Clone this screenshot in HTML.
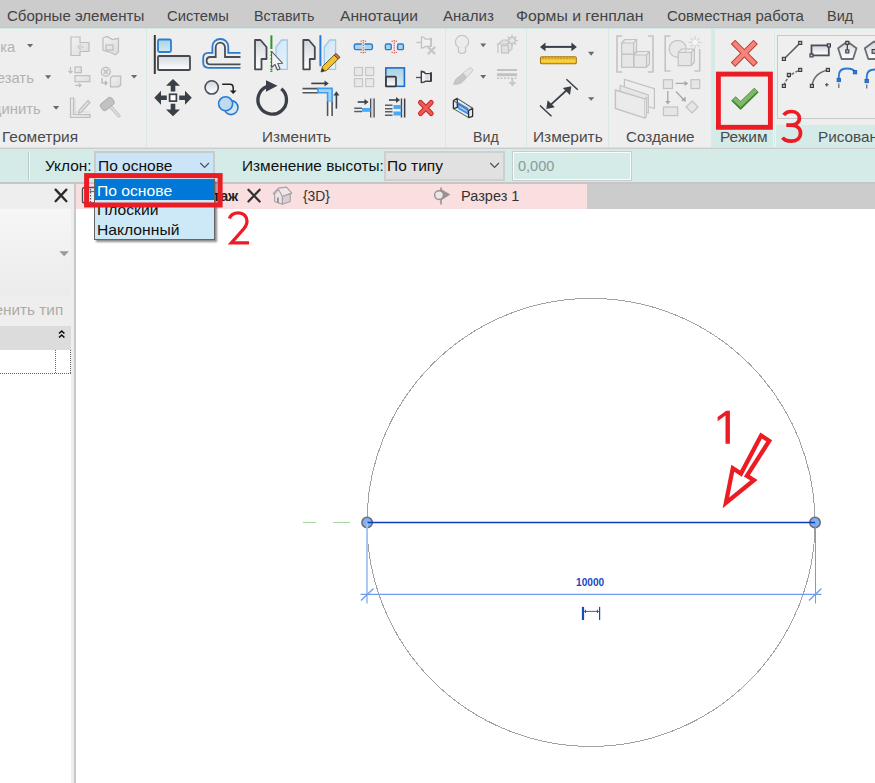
<!DOCTYPE html>
<html><head><meta charset="utf-8">
<style>
*{margin:0;padding:0;box-sizing:border-box}
html,body{width:875px;height:783px;overflow:hidden;background:#fff}
body{position:relative;font-family:"Liberation Sans",sans-serif}
.r{position:absolute}
.t{position:absolute;white-space:nowrap;line-height:0;height:0}
svg{position:absolute;overflow:visible}
</style></head><body>
<!-- tab bar -->
<div class="r" style="left:0;top:0;width:875px;height:28px;background:#cccccc"></div>
<div class="r" style="left:0;top:27px;width:875px;height:1px;background:#c6c6c6"></div>
<div class="r" style="left:0;top:28px;width:875px;height:1px;background:#d3e9e6"></div>
<!-- ribbon -->
<div class="r" style="left:0;top:29px;width:875px;height:118px;background:#eeeeee"></div>
<div class="r" style="left:0;top:147px;width:875px;height:1px;background:#d3e6e3"></div>
<div class="r" style="left:0;top:148px;width:875px;height:1px;background:#c9cccb"></div>
<!-- panel separators -->
<div class="r" style="left:146px;top:29px;width:1px;height:118px;background:#d6e9e6"></div>
<div class="r" style="left:445px;top:29px;width:1px;height:118px;background:#d6e9e6"></div>
<div class="r" style="left:526px;top:29px;width:1px;height:118px;background:#d6e9e6"></div>
<div class="r" style="left:608px;top:29px;width:1px;height:118px;background:#d6e9e6"></div>
<div class="r" style="left:711px;top:29px;width:4px;height:118px;background:#d4ebe8"></div>
<div class="r" style="left:715px;top:125px;width:58px;height:22px;background:#d4ebe8"></div>
<div class="r" style="left:773px;top:29px;width:3px;height:118px;background:#eef2f1"></div>
<div class="r" style="left:774px;top:29px;width:1px;height:118px;background:#d4ebe8"></div>
<div class="r" style="left:776px;top:125px;width:99px;height:22px;background:#d4ebe8"></div>
<div class="r" style="left:777px;top:35px;width:110px;height:84px;border:1px solid #c9c9c9;background:#efefef"></div>
<!-- options bar -->
<div class="r" style="left:0;top:149px;width:875px;height:33px;background:#d4ebe8"></div>
<div class="r" style="left:28px;top:152px;width:1px;height:28px;background:#b9c9c7"></div>
<div class="r" style="left:29px;top:152px;width:1px;height:28px;background:#f2f8f7"></div>
<div class="r" style="left:94px;top:151px;width:121px;height:30px;background:#cce4f7;border:2px solid #c9cacc"></div>
<div class="r" style="left:384px;top:151px;width:121px;height:30px;background:#e1e1e1;border:2px solid #cfcfcf"></div>
<div class="r" style="left:512px;top:151px;width:120px;height:30px;background:#c8cccc"></div>
<div class="r" style="left:513px;top:152px;width:118px;height:28px;background:#d4ebe8;border:1.5px solid #fafcfc"></div>
<div class="r" style="left:0;top:182px;width:875px;height:2px;background:#c6c6c6"></div>
<!-- left panel -->
<div class="r" style="left:0;top:184px;width:74px;height:599px;background:#eeeeee"></div>
<div class="r" style="left:74px;top:184px;width:2px;height:599px;background:#c9c9c9"></div>
<div class="r" style="left:0;top:209px;width:71px;height:87px;background:linear-gradient(#f6f6f6,#ebebeb)"></div>
<div class="r" style="left:0;top:326px;width:71px;height:24px;background:#dcdcdc"></div>
<div class="r" style="left:0;top:350px;width:71px;height:433px;background:#ffffff"></div>
<div class="r" style="left:0;top:373px;width:71px;height:1px;background:repeating-linear-gradient(90deg,#666 0 1px,transparent 1px 2px)"></div>
<div class="r" style="left:55px;top:350px;width:1px;height:24px;background:repeating-linear-gradient(180deg,#666 0 1px,transparent 1px 2px)"></div>
<div class="r" style="left:70px;top:350px;width:1px;height:24px;background:repeating-linear-gradient(180deg,#666 0 1px,transparent 1px 2px)"></div>
<!-- view tabs -->
<div class="r" style="left:76px;top:184px;width:511px;height:25px;background:#f9dfe0"></div>
<div class="r" style="left:587px;top:184px;width:288px;height:25px;background:#cccccc"></div>
<svg width="875" height="783" style="left:0;top:0" viewBox="0 0 875 783">
<defs>
<linearGradient id="gGray" x1="0" y1="0" x2="0" y2="1"><stop offset="0" stop-color="#d2d6dc"/><stop offset="1" stop-color="#ffffff"/></linearGradient>
<linearGradient id="gBlue" x1="0" y1="0" x2="0" y2="1"><stop offset="0" stop-color="#a9d2e6"/><stop offset="1" stop-color="#d3e9f3"/></linearGradient>
<linearGradient id="gLB" x1="0" y1="0" x2="1" y2="1"><stop offset="0" stop-color="#cfe6f4"/><stop offset="1" stop-color="#e6f2fa"/></linearGradient>
<linearGradient id="gDis" x1="0" y1="0" x2="1" y2="1"><stop offset="0" stop-color="#f2f2f2"/><stop offset="1" stop-color="#dcdcdc"/></linearGradient>
</defs>
<!-- ===== Geometry panel (disabled) ===== -->
<g fill="#6a6a6a"><path d="M27,44 h6.2 l-3.1,3.5z"/><path d="M45,75.2 h6.2 l-3.1,3.8z"/><path d="M53,106 h6.2 l-3.1,3.7z"/><path d="M131,74.9 h6.2 l-3.1,3.5z"/></g>
<g stroke="#bdbdbd" stroke-width="1.2" fill="url(#gDis)">
 <path d="M71,37 h9 v5.5 h9 v9 h-9 v4 h-9z"/>
 <path d="M84,47 l-4,0 M81,44 l-3,3 l3,3" fill="none" stroke="#c8c8c8"/>
 <path d="M103,38 l4,-1.5 l5.5,3 l6,-1.2 v13.5 l-3,3 l-6.5,-3 l-6,-1.5z"/>
 <rect x="106" y="45" width="7" height="5" fill="none"/>
 <rect x="75" y="67" width="6.3" height="5.7"/>
 <rect x="75" y="75.7" width="14.8" height="6"/>
 <path d="M70.5,67 v6 M68.5,71 l2,2 l2,-2 M75,85.3 h6 M79,83.5 l2,1.8 l-2,1.8" fill="none"/>
 <circle cx="105.8" cy="71.9" r="4.5"/>
 <path d="M103.5,69.5 l4.6,4.6 M108.1,69.5 l-4.6,4.6" fill="none"/>
 <path d="M102,78 v5 h5 M105,81 l2,2 l-2,2" fill="none" stroke="#b0b0b0"/>
 <path d="M110.5,78 l2,-1.8 h8.2 v8.8 l-2,1.8 h-8.2z"/>
 <path d="M70.5,98 v19.5 h19.5 v-3 h-16.5 v-16.5z"/>
 <path d="M75,114.5 v-16.5 M70.5,112 h19.5" fill="none" stroke="#d8d8d8"/>
 <path d="M79.5,110 l8.5,-9.5 l2,2 l-8.5,9.5 l-3,1z" fill="#e6e6e6"/>
 <path d="M109.5,105.5 L119,115.8" stroke="#c6c6c6" stroke-width="3.4" stroke-linecap="round"/>
 <path d="M109.5,105.5 L119,115.8" stroke="#dedede" stroke-width="1.4" stroke-linecap="round"/>
 <rect x="100.3" y="100" width="14" height="8" rx="3" transform="rotate(-40 107.3 104)" fill="#c2c2c2" stroke="#b4b4b4"/>
</g>
<!-- ===== Modify panel ===== -->
<!-- align -->
<rect x="153.8" y="35" width="2" height="39" fill="#3a3a3a"/>
<rect x="158" y="39.5" width="13" height="12.5" rx="1.5" fill="url(#gBlue)" stroke="#2a7fd0" stroke-width="1.8"/>
<rect x="158" y="56" width="32" height="14" rx="1" fill="url(#gGray)" stroke="#454a52" stroke-width="1.8"/>
<!-- offset -->
<path d="M240.5,52.8 H228.3 V46.5 A7.95,7.5 0 0 0 212.4,46.5 V52.8 H208.5 Q203.2,52.8 203.2,58 V62.5 Q203.2,67.8 208.5,67.8 H240.5" fill="none" stroke="#2a7ad0" stroke-width="1.8"/>
<path d="M240.5,57 H225 V47.3 A4.65,4.65 0 0 0 215.7,47.3 V57 H210.3 Q206.6,57 206.6,60.7 Q206.6,64.4 210.3,64.4 H240.5" fill="none" stroke="#4a4e55" stroke-width="1.8"/>
<!-- mirror pick axis -->
<path d="M255,40 H260.5 L266.5,47 V59 H261.5 V69.3 H255 Z" fill="url(#gGray)" stroke="#454a52" stroke-width="1.8" stroke-linejoin="round"/>
<path d="M287.3,40 H281.5 L276,47 V69.3 H287.3 Z" fill="url(#gLB)" stroke="#9ccaec" stroke-width="1.3"/>
<path d="M271.4,35.3 V49" stroke="#2b9a2b" stroke-width="2"/>
<path d="M271.4,51 V70 M271.4,70.5 V72.3" stroke="#2b9a2b" stroke-width="2" stroke-dasharray="1.5 2"/>
<path d="M271.6,51.5 V67.5 L275,64.5 L277.5,70 L280,69 L277.8,63.5 L282.5,63.2 Z" fill="#f4f4f4" stroke="#555a60" stroke-width="1.1" stroke-linejoin="round"/>
<!-- mirror draw axis -->
<path d="M303.3,40 H308.8 L314.8,47 V59 H309.8 V69.3 H303.3 Z" fill="url(#gGray)" stroke="#454a52" stroke-width="1.8" stroke-linejoin="round"/>
<path d="M335.6,40 H329.8 L324.3,47 V69.3 H335.6 Z" fill="url(#gLB)" stroke="#9ccaec" stroke-width="1.3"/>
<rect x="319.4" y="35.2" width="2" height="31" fill="#2a7ad8"/>
<path d="M322.5,66.5 L334.2,55 L338.2,59 L326.5,70.5 L321,72 Z" fill="#f2c230" stroke="#5a4a20" stroke-width="0.9" stroke-linejoin="round"/>
<path d="M334.2,55 L336,53.3 L340,57.3 L338.2,59 Z" fill="#c87a4a" stroke="#6a3a20" stroke-width="0.9"/>
<path d="M321,72 L322.5,68.3 L324.7,70.5 Z" fill="#333"/>
<!-- move -->
<g fill="#3a3f48">
 <path d="M173,79 L180,85.8 H175.3 V91.5 H170.7 V85.8 H166 Z"/>
 <path d="M173,116.2 L180,109.5 H175.3 V103.8 H170.7 V109.5 H166 Z"/>
 <path d="M154.3,97.7 L161,90.7 V95.4 H166.8 V100 H161 V104.7 Z"/>
 <path d="M191.8,97.7 L185,90.7 V95.4 H179.2 V100 H185 V104.7 Z"/>
</g>
<rect x="169.6" y="94.3" width="6.8" height="6.8" fill="#fff" stroke="#3a3f48" stroke-width="1.7"/>
<!-- copy -->
<circle cx="211.7" cy="87.4" r="6.6" fill="url(#gGray)" stroke="#4a4f58" stroke-width="1.6"/>
<path d="M222.2,84.3 H230 Q233.2,84.3 233.2,88 V91" fill="none" stroke="#222" stroke-width="1.5"/>
<path d="M229.8,90.5 H236.6 L233.2,94 Z" fill="#222"/>
<circle cx="231" cy="107.6" r="7" fill="#cfe6f3" stroke="#2a7ad0" stroke-width="1.6"/>
<circle cx="225.6" cy="103.8" r="7" fill="#bedcee" stroke="#2a7ad0" stroke-width="1.6"/>
<!-- rotate -->
<path d="M281.3,88.8 A14.3,14.3 0 1 1 267,86.5" fill="none" stroke="#3a3f48" stroke-width="3.3"/>
<path d="M266,80.3 L277.5,85.8 L266,91.7 Z" fill="#3a3f48"/>
<!-- trim extend corner -->
<rect x="303" y="88.6" width="15" height="4.1" fill="#f8f8f8"/><path d="M302.5,88.6 H318 M302.5,92.7 H318" stroke="#50555c" stroke-width="1.6"/>
<path d="M318,88.4 H332.1 V101.5 H327.6 V92.8 H318 Z" fill="#a6d4ee" stroke="#3c9ef2" stroke-width="1.6"/>
<rect x="327.6" y="101.5" width="4.5" height="14.5" fill="#f8f8f8"/><path d="M327.6,101.5 V116 M332.1,101.5 V116" stroke="#50555c" stroke-width="1.6"/>
<path d="M311.3,83.4 H325" stroke="#3a3f48" stroke-width="1.6"/>
<path d="M324.5,80.4 L328.8,83.4 L324.5,86.4 Z" fill="#3a3f48"/>
<path d="M336.4,108.6 V95" stroke="#3a3f48" stroke-width="1.6"/>
<path d="M333.4,95.5 L336.4,91.3 L339.4,95.5 Z" fill="#3a3f48"/>
<!-- small modify icons row1 -->
<path d="M361.8,44 H356 Q354.3,44 354.3,45.6 V47.9 Q354.3,49.6 356,49.6 H361.8 M364.6,44 H370.6 Q372.4,44 372.4,45.6 V47.9 Q372.4,49.6 370.6,49.6 H364.6" fill="#a9d4ea" stroke="#2a7ad0" stroke-width="1.4"/>
<path d="M363.2,40 V53.5" stroke="#d43030" stroke-width="1" stroke-dasharray="1.4 1"/>
<path d="M360.5,41.2 h1.3 M364.7,41.2 h1.3 M360.5,52.3 h1.3 M364.7,52.3 h1.3" stroke="#d43030" stroke-width="0.9"/>
<rect x="385.4" y="44" width="5.8" height="5.6" rx="1.2" fill="#a9d4ea" stroke="#2a7ad0" stroke-width="1.4"/>
<rect x="397.6" y="44" width="5.8" height="5.6" rx="1.2" fill="#a9d4ea" stroke="#2a7ad0" stroke-width="1.4"/>
<path d="M394.2,40 V53.5" stroke="#d43030" stroke-width="1" stroke-dasharray="1.4 1"/>
<path d="M391.5,41.2 h1.3 M395.7,41.2 h1.3 M391.5,52.3 h1.3 M395.7,52.3 h1.3" stroke="#d43030" stroke-width="0.9"/>
<path d="M416.4,42.5 H421.5" stroke="#c4c4c4" stroke-width="1.3"/>
<path d="M421.5,36.8 Q424.5,37 425.5,39.2 H430.8 V46.3 H425.5 Q424.5,48 421.5,48 Z" fill="#f0f0f0" stroke="#c2c2c2" stroke-width="1.3" stroke-linejoin="round"/>
<path d="M431,37.8 V46.5" stroke="#c2c2c2" stroke-width="1.8"/>
<path d="M428.5,47.5 L434.5,53.5 M434.5,47.5 L428.5,53.5" stroke="#c6c6c6" stroke-width="2.4" stroke-linecap="round"/>
<!-- row2 -->
<g fill="#e8e8e8" stroke="#c6c6c6" stroke-width="1.2">
 <rect x="354.5" y="67.5" width="8" height="8"/><rect x="365.7" y="67.5" width="8" height="8"/>
 <rect x="354.5" y="78.6" width="8" height="8"/><rect x="365.7" y="78.6" width="8" height="8"/>
</g>
<rect x="385.8" y="67.9" width="18.6" height="18.4" fill="url(#gBlue)" stroke="#1e6cc8" stroke-width="1.6"/>
<rect x="386" y="76.6" width="10" height="9.8" rx="1" fill="url(#gGray)" stroke="#333840" stroke-width="1.7"/>
<path d="M416,77.5 H421.3" stroke="#4a4f58" stroke-width="1.3"/>
<path d="M421.3,71.2 Q424.5,71.5 425.5,73.6 H430.8 V81.2 H425.5 Q424.5,82.6 421.3,82.6 Z" fill="#f2f2f2" stroke="#3a3f48" stroke-width="1.4" stroke-linejoin="round"/>
<path d="M431,72.3 V81.4" stroke="#3a3f48" stroke-width="2"/>
<rect x="425.3" y="75.2" width="4" height="4.3" fill="#dcdcdc"/>
<!-- row3 -->
<path d="M370.8,98.4 V117.5 M374,98.4 V117.5" stroke="#3a3f48" stroke-width="1.4"/>
<rect x="371.5" y="98.5" width="1.8" height="19" fill="#d8d8d8"/>
<path d="M357.7,102 H365" stroke="#3a3f48" stroke-width="1.6"/><path d="M364.5,99 L368.5,102 L364.5,105 Z" fill="#3a3f48"/>
<path d="M354.2,108.2 H362 M354.2,111.6 H362" stroke="#5a5f66" stroke-width="1.5"/>
<rect x="362" y="108" width="8.5" height="3.8" fill="#4aa8f4"/>
<path d="M401.5,98.4 V117.5 M404.7,98.4 V117.5" stroke="#3a3f48" stroke-width="1.4"/>
<rect x="402.2" y="98.5" width="1.8" height="19" fill="#d8d8d8"/>
<path d="M389,100 H396.5" stroke="#3a3f48" stroke-width="1.6"/><path d="M396,97 L400,100 L396,103 Z" fill="#3a3f48"/>
<path d="M385,105.3 H392.5 M385,108.8 H392.5 M385,111.8 H392.5 M385,115.2 H392.5" stroke="#5a5f66" stroke-width="1.4"/>
<rect x="393.5" y="105" width="7.8" height="4" fill="#4aa8f4"/><rect x="393.5" y="111.5" width="7.8" height="4" fill="#4aa8f4"/>
<path d="M420.5,102.5 L431.2,113.5 M431.2,102.5 L420.5,113.5" stroke="#c82828" stroke-width="5" stroke-linecap="round"/>
<path d="M420.5,102.5 L431.2,113.5 M431.2,102.5 L420.5,113.5" stroke="#f05a55" stroke-width="3" stroke-linecap="round"/>
<!-- ===== View panel ===== -->
<g fill="#6a6a6a"><path d="M480.2,43.5 h6 l-3,3.8z"/><path d="M480.2,75 h6 l-3,3.7z"/><path d="M588,51.7 h6.3 l-3.15,4z"/><path d="M588,97.2 h6.3 l-3.15,3.5z"/></g>
<g stroke="#c4c4c4" stroke-width="1.2" fill="#ececec">
 <circle cx="462" cy="42" r="6.6"/>
 <path d="M458.5,47.5 V52 Q462,55 465.5,52 V47.5" />
 <path d="M498,44 l5,-4 h9 l-5,4z M498,44 v9 M507,44 v9 M512,40 v9 l-5,4" fill="#e4e4e4"/>
 <rect x="501.5" y="45.5" width="7" height="7.5" fill="#e2e2e2"/>
 <path d="M512,35.5 l1,2.5 l2.5,-1 l-1,2.5 l2.5,1 l-2.5,1 l1,2.5 l-2.5,-1 l-1,2.5 l-1,-2.5 l-2.5,1 l1,-2.5 l-2.5,-1 l2.5,-1 l-1,-2.5 l2.5,1z" fill="#e8e8e8"/>
</g>
<path d="M453.5,84.3 Q455,78.5 459,76.5 L470.5,67.5 L473,70 L463.5,81 Q460,85 453.5,84.3 Z" fill="#c6c6c6" stroke="#bdbdbd" stroke-width="0.8"/>
<path d="M463,73 L470.5,67.5 L473,70 L467,77.5 Z" fill="#e6e6e6" stroke="#c8c8c8" stroke-width="0.8"/>
<rect x="497" y="69" width="20" height="2" fill="#c2c2c2"/>
<rect x="497" y="73.2" width="20" height="3" fill="#c2c2c2"/>
<path d="M497,78.2 H517" stroke="#c2c2c2" stroke-width="1.5" stroke-dasharray="2 1.5"/>
<path d="M512.4,78.5 V83" stroke="#c8c8c8" stroke-width="2"/>
<path d="M508.5,82 H516.3 L512.4,86.6Z" fill="#c8c8c8"/>
<!-- section box -->
<path d="M458,102 L468.5,108 V115 L458,109 Z" fill="#3c94f4"/>
<path d="M459.5,105 L467,109.3 V112 L459.5,107.8 Z" fill="#9ccaf2"/>
<g fill="none" stroke="#2b2f36" stroke-width="1.3" stroke-linejoin="round">
 <path d="M453.4,100.6 L457.3,98.4 V107.3 L453.4,108.6 Z"/>
 <path d="M468.6,110.6 L472.6,108.3 V116.3 L468.6,117.6 Z"/>
</g>
<path d="M457.3,98.4 L472.6,108.3 M453.4,100.6 L468.6,110.6 M453.4,108.6 L468.6,117.6" fill="none" stroke="#5a5e66" stroke-width="1.1"/>
<!-- ===== Measure ===== -->
<path d="M544,46.9 H573" stroke="#3a3f48" stroke-width="2"/>
<path d="M540,46.9 L545.5,42.5 V51.3 Z M576.9,46.9 L571.4,42.5 V51.3 Z" fill="#3a3f48"/>
<rect x="540.5" y="56.8" width="35.8" height="7" rx="1.3" fill="#f2c42a" stroke="#a8740e" stroke-width="1.1"/>
<path d="M543,57.5 v1.5 M546,57.5 v1.5 M549,57.5 v1.5 M552,57.5 v1.5 M555,57.5 v1.5 M558,57.5 v1.5 M561,57.5 v1.5 M564,57.5 v1.5 M567,57.5 v1.5 M570,57.5 v1.5 M573,57.5 v1.5" stroke="#9a6a10" stroke-width="0.8"/>
<rect x="541.2" y="60.5" width="34.5" height="1.2" fill="#f8d860"/>
<path d="M549,106.3 L568.5,88.5" stroke="#3a3f48" stroke-width="1.7"/>
<path d="M546.3,109 L547.6,100.3 L554.8,107.2 Z M571.3,86.2 L570,94.9 L562.8,88 Z" fill="#3a3f48"/>
<path d="M566.4,79.2 L577.8,89.7 M540,105.5 L551.5,116.3" stroke="#3a3f48" stroke-width="1.5"/>
<!-- ===== Create panel (disabled) ===== -->
<g fill="none" stroke="#c4c4c4" stroke-width="1.6">
 <path d="M622.3,36 H617 V72 H622.3 M647.8,36 H653 V72 H647.8"/>
 <path d="M670.6,36 H665.2 V71 H670.6 M694.5,71 H699.7 V49"/>
</g>
<g fill="#e6e6e6" stroke="#c2c2c2" stroke-width="1.2">
 <path d="M621.6,67.3 V43 l3,-3.5 h12 v11.5 l-3,3.3 h-12 M621.6,43 h12 l3,-3.5 M633.6,43 v11.3"/>
 <rect x="621.6" y="54.3" width="12" height="13"/>
 <path d="M634,67.3 V55 l3,-3.5 h12.5 v12.5 l-3,3.3z M634,55 h12.5 l3,-3.5 M646.5,55 v12.3"/>
 <circle cx="677.7" cy="48.8" r="8.5" fill="#e8e8e8"/>
 <path d="M678.2,65.7 V52.5 l3.2,-3.5 h13 v13 l-3.2,3.7z M678.2,52.5 h13 l3.2,-3.5 M691.4,52.5 v13.2"/>
 <path d="M695,36 v12.5 M688.7,42.3 h12.6 M690.5,37.8 l9,9 M699.5,37.8 l-9,9" stroke="#d2d2d2"/>
 <circle cx="695" cy="42.3" r="2.6" fill="#f6f6f6" stroke="none"/>
 <path d="M624.4,79.4 L654.4,88.7 V108.5 L624.4,99 Z" fill="#eeeeee"/>
 <path d="M620.2,85.5 L648.3,95 V113 L620.2,104 Z" fill="#e6e6e6"/>
 <path d="M615.4,90 L644.8,98.9 V118.1 L615.4,108.5 Z" fill="#ebebeb" stroke-width="1.4"/>
 <path d="M644.8,98.9 L646.3,97.8 V116.5 L644.8,118.1" fill="#f4f4f4"/>
 <rect x="663.5" y="79.7" width="9" height="8.8"/>
 <rect x="691" y="79.7" width="8.7" height="8.8"/>
 <rect x="663.5" y="107" width="14.2" height="8.6"/>
 <path d="M692.1,101 l6,6 l-6,6 l-6,-6z"/>
</g>
<g stroke="#a8a8a8" stroke-width="1.3" fill="#a8a8a8">
 <path d="M675.7,83.4 H685 M667.8,91 V101.5 M676,91.5 L683,99" fill="none"/>
 <path d="M684.5,80.8 L688.3,83.4 L684.5,86 Z M665.2,101 H670.4 L667.8,104.6 Z M685.8,101.8 L685.6,96.5 L681,100.5Z" stroke="none"/>
</g>
<!-- ===== Mode ===== -->
<path d="M733,41.9 L755.7,64.7 M755.7,41.9 L733,64.7" stroke="#c03c30" stroke-width="6.2"/>
<path d="M733.7,42.6 L755,64 M755,42.6 L733.7,64" stroke="#f5847a" stroke-width="4.2"/>
<path d="M733.4,98.5 L740.6,105.5 L756.5,90.1" fill="none" stroke="#3c8a2e" stroke-width="6.3" stroke-linejoin="miter"/>
<path d="M734.1,98.5 L740.6,104.5 L755.8,90.1" fill="none" stroke="#80b868" stroke-width="4.1" stroke-linejoin="miter"/>
<!-- ===== Draw gallery ===== -->
<path d="M784,59 L800.2,42.9" stroke="#5a5e64" stroke-width="1.5"/>
<g fill="#b8bcc2" stroke="#3a3e44" stroke-width="1.1">
 <rect x="782.35" y="57.35" width="3.1" height="3.1"/><rect x="798.65" y="41.35" width="3.1" height="3.1"/>
</g>
<rect x="811.5" y="45.4" width="17.3" height="10" fill="url(#gGray)" stroke="#4a4f58" stroke-width="1.8"/>
<g fill="#b8bcc2" stroke="#3a3e44" stroke-width="1.1">
 <rect x="809.95" y="53.85" width="3.1" height="3.1"/><rect x="827.35" y="43.85" width="3.1" height="3.1"/>
</g>
<path d="M847.3,41.5 L856.5,48.2 L853,59 H841.6 L838.1,48.2 Z" fill="url(#gGray)" stroke="#6a6e74" stroke-width="1.8" stroke-linejoin="round"/>
<path d="M847.3,43 V50" stroke="#33373d" stroke-width="1.2"/>
<g fill="#b8bcc2" stroke="#3a3e44" stroke-width="1.1"><rect x="845.75" y="41.35" width="3.1" height="3.1"/><rect x="845.75" y="49.85" width="3.1" height="3.1"/></g>
<path d="M874,41.5 L883.2,48.2 L879.7,59 H868.3 L864.8,48.2 Z" fill="url(#gGray)" stroke="#6a6e74" stroke-width="1.8" stroke-linejoin="round"/>
<rect x="872.1" y="49.5" width="3.8" height="3.8" fill="#b8bcc2" stroke="#3a3e44" stroke-width="1.1"/>
<path d="M784,85.5 Q787,75 800,70" fill="none" stroke="#6a6e74" stroke-width="1.5" stroke-dasharray="3 1.5"/>
<g fill="#b8bcc2" stroke="#3a3e44" stroke-width="1.1"><rect x="782.35" y="84.35" width="3.1" height="3.1"/><rect x="787.35" y="73.35" width="3.1" height="3.1"/><rect x="798.65" y="68.35" width="3.1" height="3.1"/></g>
<path d="M812,85.5 Q814,73 828,70" fill="none" stroke="#6a6e74" stroke-width="1.5"/>
<g fill="#b8bcc2" stroke="#3a3e44" stroke-width="1.1"><rect x="810.35" y="84.35" width="3.1" height="3.1"/><rect x="826.35" y="68.35" width="3.1" height="3.1"/></g>
<path d="M825,84.8 h3.6 M826.8,83 v3.6" stroke="#444" stroke-width="1.1"/>
<path d="M838.8,79 V76 Q838.8,68.5 846.5,68.5 Q853.5,68.5 855,72" fill="none" stroke="#2a7ad8" stroke-width="1.8"/>
<g fill="#2a7ad8" stroke="#1a5ab0" stroke-width="0.8"><rect x="837.1" y="78.3" width="3.4" height="3.4"/><rect x="853.3" y="70.5" width="3.4" height="3.4"/></g>
<path d="M838.8,83.5 V88" stroke="#6a6e74" stroke-width="1.3"/>
<path d="M866.7,80 V77 Q866.7,69.5 874.5,69.5 H880" fill="none" stroke="#2a7ad8" stroke-width="1.8"/>
<rect x="865" y="79.3" width="3.4" height="3.4" fill="#2a7ad8" stroke="#1a5ab0" stroke-width="0.8"/>
<path d="M866.7,84.5 V88.5" stroke="#6a6e74" stroke-width="1.3"/>
<!-- combobox chevrons -->
<path d="M200.3,163 L204.6,167.3 L208.9,163" fill="none" stroke="#505050" stroke-width="1.2"/>
<path d="M490.3,163 L494.6,167.3 L498.9,163" fill="none" stroke="#505050" stroke-width="1.2"/>
<!-- left panel -->
<path d="M55.6,189.6 L66.4,201.2 M66.4,189.6 L55.6,201.2" stroke="#2b2b2b" stroke-width="2.3" stroke-linecap="round"/>
<path d="M59.3,251.2 H69 L64.15,256.2 Z" fill="#9a9a9a"/>
<path d="M59,333.5 L61.7,331 L64.4,333.5 M59,337.5 L61.7,335 L64.4,337.5" fill="none" stroke="#111" stroke-width="1.6"/>
<!-- view tabs -->
<rect x="82.5" y="187.5" width="16" height="15.5" rx="2" fill="#f0f0f4" stroke="#4a4f58" stroke-width="1.4"/><path d="M90.5,189 V202" stroke="#555a62" stroke-width="1.3" stroke-dasharray="1.5 1.5"/><path d="M89.5,191.5 H94" stroke="#6a6e74" stroke-width="1.2"/>
<path d="M248.4,189.7 L259.7,201.5 M259.7,189.7 L248.4,201.5" stroke="#333" stroke-width="2.2" stroke-linecap="round"/>
<path d="M273.3,193.7 L278.5,188.1 L286.5,187.2 L291.8,193.1 L282.4,196.6 Z" fill="#ede7ea" stroke="#a8a0a4" stroke-width="1.2" stroke-linejoin="round"/>
<path d="M274.6,194 L278.5,189.5 L282.4,196.6 V204.3 L274.6,201.6 Z" fill="#ebe5e8" stroke="#a8a0a4" stroke-width="1.1" stroke-linejoin="round"/>
<path d="M282.4,196.6 L290.3,193.8 V201.6 L282.4,204.3 Z" fill="#d6d0d4" stroke="#a8a0a4" stroke-width="1.1" stroke-linejoin="round"/>
<path d="M276.9,202.8 V198 Q277.9,196.4 278.9,198 V203.4 Z" fill="#9c9498"/>
<path d="M441,187.5 V204.5" stroke="#9a9094" stroke-width="1.6"/>
<path d="M441,189 L450.3,194.5 L441,200.5 Z" fill="#9a9094"/>
<circle cx="439" cy="195.1" r="4.4" fill="#ece6e8" stroke="#9a9094" stroke-width="1.4"/>
<!-- canvas -->
<circle cx="591" cy="522.4" r="224" fill="none" stroke="#a2a2a2" stroke-width="1" shape-rendering="crispEdges"/>
<circle cx="367.1" cy="522.5" r="5.2" fill="#7db2f6" stroke="#6f6f6f" stroke-width="1.6"/>
<circle cx="815" cy="522.5" r="5.2" fill="#7db2f6" stroke="#6f6f6f" stroke-width="1.6"/>
<path d="M303,522.5 H316 M333,522.5 H350" stroke="#a6d6a0" stroke-width="1.2"/>
<path d="M367,522.5 V603.5" stroke="#a2c4f6" stroke-width="1.8"/><path d="M815.5,522.5 V603.5" stroke="#6f9ef0" stroke-width="1"/>
<path d="M360.5,594.4 H821.5" stroke="#6d9cf0" stroke-width="1.1"/>
<path d="M361,600.5 L373.5,588.5 M809,600.5 L821.5,588.5" stroke="#6d9cf0" stroke-width="1.3"/>
<path d="M367.5,522.5 H815" stroke="#0c3cbc" stroke-width="1.5"/>
<rect x="581.9" y="606.9" width="2.2" height="13.1" fill="#1a48c0"/>
<rect x="599" y="606.9" width="1.2" height="13.1" fill="#1a48c0"/>
<path d="M584,611.4 H599 M585.5,609.8 V613 M597.5,609.8 V613" stroke="#1a48c0" stroke-width="0.9"/>

</svg>
<div class="t" style="left:7.22px;transform-origin:0 0;top:15.56px;font-size:15.4px;color:#444444;font-weight:400;transform:scaleX(0.9783)">Сборные элементы</div>
<div class="t" style="left:166.84px;transform-origin:0 0;top:15.56px;font-size:15.4px;color:#444444;font-weight:400;transform:scaleX(0.9587)">Системы</div>
<div class="t" style="left:253.67px;transform-origin:0 0;top:15.56px;font-size:15.4px;color:#444444;font-weight:400;transform:scaleX(0.9266)">Вставить</div>
<div class="t" style="left:340.30px;transform-origin:0 0;top:15.56px;font-size:15.4px;color:#444444;font-weight:400;transform:scaleX(1.0145)">Аннотации</div>
<div class="t" style="left:442.70px;transform-origin:0 0;top:15.56px;font-size:15.4px;color:#444444;font-weight:400;transform:scaleX(0.9788)">Анализ</div>
<div class="t" style="left:516.47px;transform-origin:0 0;top:15.56px;font-size:15.4px;color:#444444;font-weight:400;transform:scaleX(1.0254)">Формы и генплан</div>
<div class="t" style="left:667.03px;transform-origin:0 0;top:15.56px;font-size:15.4px;color:#444444;font-weight:400;transform:scaleX(0.9707)">Совместная работа</div>
<div class="t" style="left:826.86px;transform-origin:0 0;top:15.56px;font-size:15.4px;color:#444444;font-weight:400;transform:scaleX(0.9407)">Вид</div>
<div class="t" style="left:2.37px;transform-origin:0 0;top:136.80px;font-size:15px;color:#4a4a4a;font-weight:400;transform:scaleX(1.0319)">Геометрия</div>
<div class="t" style="left:261.58px;transform-origin:0 0;top:136.80px;font-size:15px;color:#4a4a4a;font-weight:400;transform:scaleX(1.0212)">Изменить</div>
<div class="t" style="left:473.05px;transform-origin:0 0;top:136.80px;font-size:15px;color:#4a4a4a;font-weight:400;transform:scaleX(0.9462)">Вид</div>
<div class="t" style="left:532.57px;transform-origin:0 0;top:136.80px;font-size:15px;color:#4a4a4a;font-weight:400;transform:scaleX(1.0288)">Измерить</div>
<div class="t" style="left:625.69px;transform-origin:0 0;top:136.80px;font-size:15px;color:#4a4a4a;font-weight:400;transform:scaleX(1.0136)">Создание</div>
<div class="t" style="left:720.37px;transform-origin:0 0;top:136.80px;font-size:15px;color:#4a4a4a;font-weight:400;transform:scaleX(1.0289)">Режим</div>
<div class="t" style="left:818.38px;transform-origin:0 0;top:136.80px;font-size:15px;color:#4a4a4a;font-weight:400;transform:scaleX(1.0212)">Рисование</div>
<div class="t" style="left:-50.16px;transform-origin:0 0;top:46.98px;font-size:14.5px;color:#b2b2b2;font-weight:400;transform:scaleX(1.0212)">Подрезка</div>
<div class="t" style="left:-32.26px;transform-origin:0 0;top:77.98px;font-size:14.5px;color:#b2b2b2;font-weight:400;transform:scaleX(1.0212)">Вырезать</div>
<div class="t" style="left:-33.55px;transform-origin:0 0;top:108.98px;font-size:14.5px;color:#b2b2b2;font-weight:400;transform:scaleX(1.0212)">Соединить</div>
<div class="t" style="left:45.17px;transform-origin:0 0;top:166.40px;font-size:15px;color:#101010;font-weight:400;transform:scaleX(1.0279)">Уклон:</div>
<div class="t" style="left:97.56px;transform-origin:0 0;top:166.40px;font-size:15px;color:#101010;font-weight:400;transform:scaleX(1.0357)">По основе</div>
<div class="t" style="left:241.57px;transform-origin:0 0;top:166.40px;font-size:15px;color:#101010;font-weight:400;transform:scaleX(1.0250)">Изменение высоты:</div>
<div class="t" style="left:387.27px;transform-origin:0 0;top:166.40px;font-size:15px;color:#101010;font-weight:400;transform:scaleX(1.0321)">По типу</div>
<div class="t" style="left:518.03px;transform-origin:0 0;top:166.40px;font-size:15px;color:#8a9a98;font-weight:400;transform:scaleX(0.9667)">0,000</div>
<div class="t" style="left:302.50px;transform-origin:0 0;top:196.15px;font-size:14px;color:#333333;font-weight:400;transform:scaleX(0.9889)">{3D}</div>
<div class="t" style="left:461.26px;transform-origin:0 0;top:196.15px;font-size:14px;color:#333333;font-weight:400;transform:scaleX(1.0382)">Разрез 1</div>
<div class="t" style="left:203.28px;transform-origin:0 0;top:196.15px;font-size:14px;color:#222222;font-weight:700;transform:scaleX(1.0212)">Этаж</div>
<div class="t" style="left:-33.79px;transform-origin:0 0;top:309.80px;font-size:15px;color:#aeaaa6;font-weight:400;transform:scaleX(1.0212)">Изменить тип</div>
<div class="t" style="left:576.04px;transform-origin:0 0;top:582.36px;font-size:10.5px;color:#1a48c0;font-weight:700;transform:scaleX(0.9643)">10000</div>
<div class="r" style="left:94px;top:179px;width:121px;height:61px;background:#cde8f7;border:1px solid #656565;box-shadow:2px 2px 2px rgba(0,0,0,0.45)"></div>
<div class="r" style="left:95px;top:180px;width:119px;height:20px;background:#0078d7"></div>
<div class="t" style="left:96.86px;transform-origin:0 0;top:190.50px;font-size:15px;color:#ffffff;font-weight:400;transform:scaleX(1.0443)">По основе</div>
<div class="t" style="left:96.86px;transform-origin:0 0;top:210.40px;font-size:15px;color:#101010;font-weight:400;transform:scaleX(1.0443)">Плоский</div>
<div class="t" style="left:96.86px;transform-origin:0 0;top:230.30px;font-size:15px;color:#101010;font-weight:400;transform:scaleX(1.0443)">Наклонный</div>
<svg width="875" height="783" style="left:0;top:0" viewBox="0 0 875 783">
<g fill="none" stroke="#ec1c24">
 <rect x="86.6" y="175.6" width="133.5" height="29.4" stroke-width="5"/>
 <rect x="718.4" y="74.1" width="52" height="53.2" stroke-width="4.9"/>
 <path d="M761.1,435.5 L769.2,440.8 L746.9,475.9 L753.9,480.2 L725.9,502.8 L732.8,468.2 L741,473.6 Z" stroke-width="4.3" stroke-linejoin="miter" stroke-miterlimit="10"/>
</g>
<path d="M725.5,443.7 H729.9 V410.7 H726.3 L717.6,417 V421.3 L725.5,415.6 Z" fill="#ec1c24"/>
<path d="M229.4,218.6 C230.6,214.9 234,212.9 238.4,212.9 C243.5,212.9 247,216.4 247,221.2 C247,224.8 245.2,227.5 241.8,231 L231.4,242.8 H249.1" fill="none" stroke="#ec1c24" stroke-width="3.3"/>
<path d="M783.7,115 C785.5,112.5 788,111.5 791.1,111.5 C796,111.5 799.4,114.3 799.4,118.3 C799.4,122.5 795.5,125.2 790.5,125.2 H786.3 M790.5,125.2 C796.5,125.2 800.5,128 800.5,133 C800.5,138 796.5,141.2 791,141.2 C787,141.2 784,139.8 782.5,137.7" fill="none" stroke="#ec1c24" stroke-width="3.7"/>

</svg>
</body></html>
